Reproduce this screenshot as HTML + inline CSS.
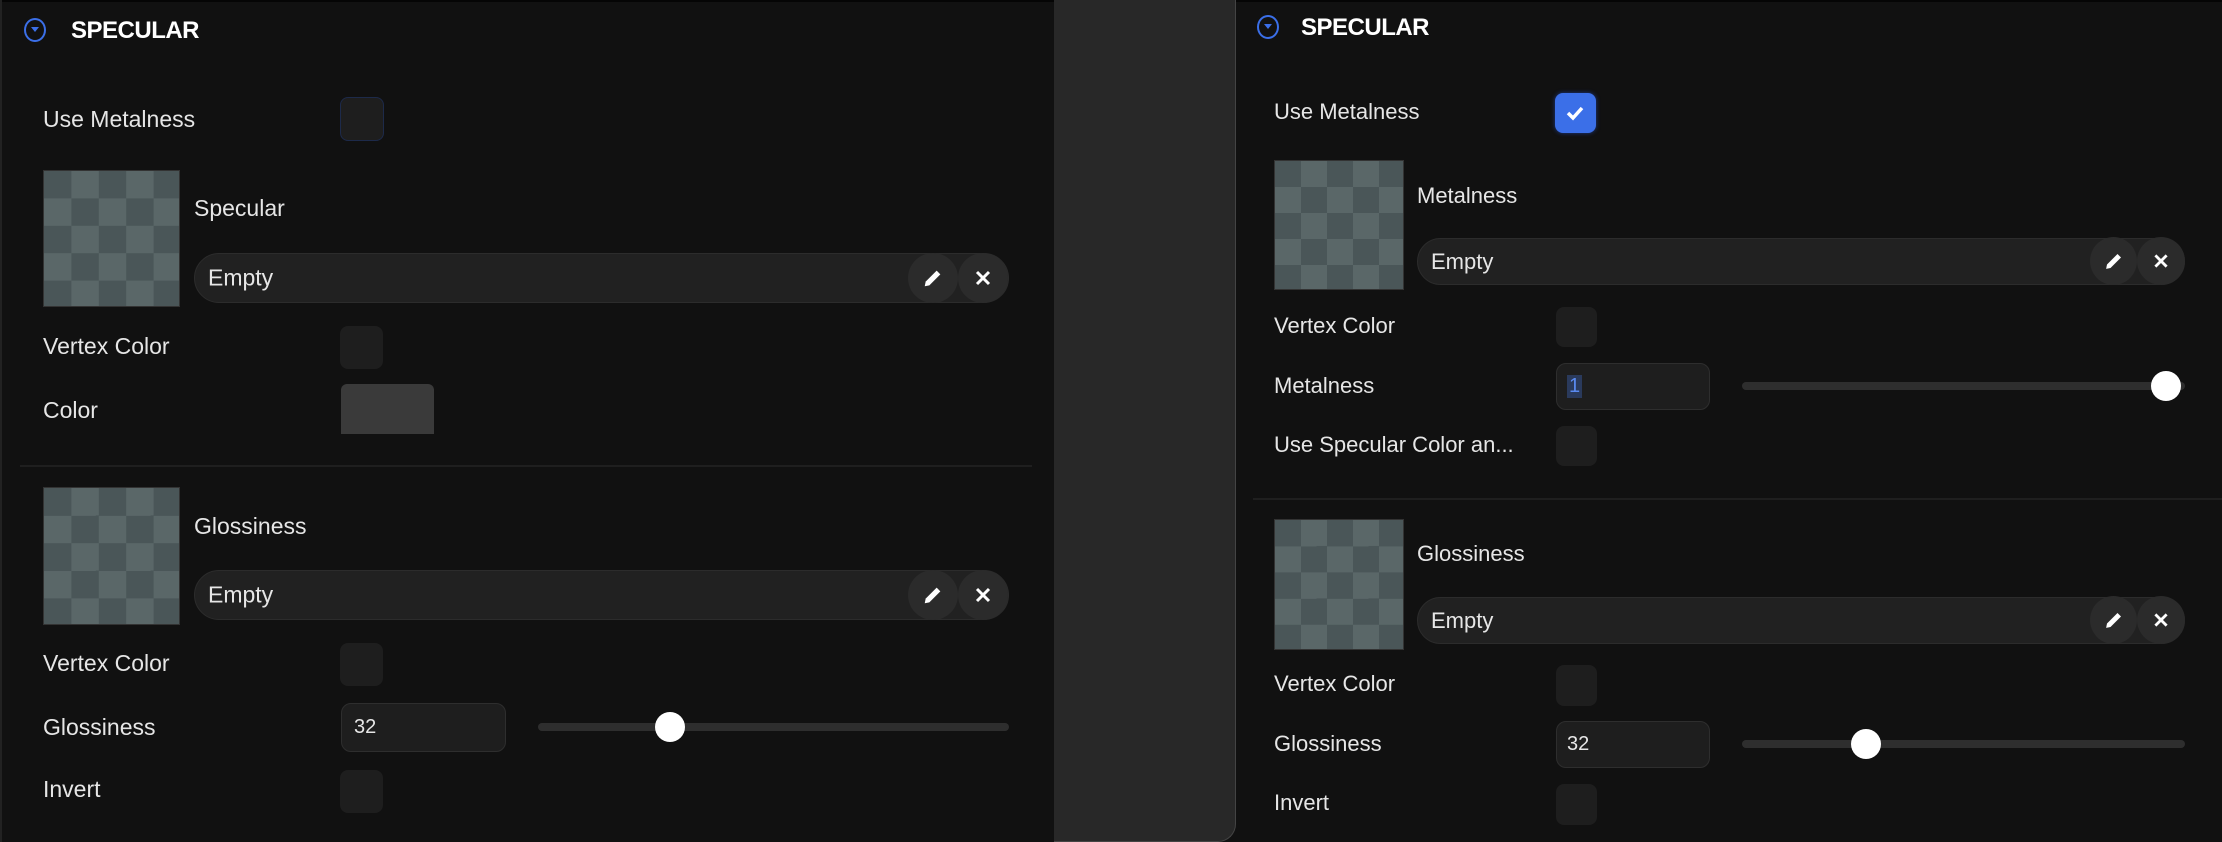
<!DOCTYPE html>
<html><head><meta charset="utf-8"><style>
*{margin:0;padding:0;box-sizing:border-box}
body{width:2222px;height:842px;background:#111;position:relative;overflow:hidden;font-family:"Liberation Sans",sans-serif;color:#e6e6e6}
.a{position:absolute}
.lbl{position:absolute;font-size:23px;line-height:30px;transform:translateY(-50%);white-space:nowrap}
.r .lbl{font-size:22px}
.hdr{position:absolute;font-size:24px;font-weight:bold;color:#fff;transform:translateY(-50%);line-height:30px;letter-spacing:-0.5px}
.ic{position:absolute;border:2.5px solid #3b6fe8;border-radius:50%;width:22px;height:24px}
.ic:after{content:"";position:absolute;left:5px;top:7px;border-left:4px solid transparent;border-right:4px solid transparent;border-top:5px solid #3b6fe8}
.cb{position:absolute;background:#1e1e1e;border-radius:8px}
.thumb{position:absolute;background-color:#5a6768;background-image:conic-gradient(transparent 25%,#4a5658 0 50%,transparent 0 75%,#4a5658 0);border:1px solid #333}
.fld{position:absolute;background:#212121;border:1px solid #2c2c2c;border-radius:30px}
.fld span{position:absolute;left:13px;top:50%;transform:translateY(-50%);font-size:23px}
.btn{position:absolute;background:#2b2b2b;border-radius:50%}
.btn svg{position:absolute;left:50%;top:50%;transform:translate(-50%,-50%)}
.inp{position:absolute;background:#1e1e1e;border:1px solid #2e2e2e;border-radius:10px;font-size:20px}
.trk{position:absolute;height:8px;background:#2e2e2e;border-radius:4px}
.knob{position:absolute;width:30px;height:30px;border-radius:50%;background:#fff}
.div{position:absolute;height:2px;background:#1f1f1f}
</style></head><body>
<div class="a" style="left:0;top:0;width:2222px;height:2px;background:#050505"></div>
<div class="a" style="left:1054px;top:0;width:182px;height:842px;background:#282828;border-right:1px solid #444;border-bottom:1px solid #444;border-bottom-right-radius:18px"></div>
<div class="a" style="left:0;top:0;width:2px;height:842px;background:#222"></div>

<!-- LEFT -->
<div class="ic" style="left:24px;top:18px"></div>
<div class="hdr" style="left:71px;top:31px">SPECULAR</div>
<div class="lbl" style="left:43px;top:119px">Use Metalness</div>
<div class="cb" style="left:340px;top:97px;width:44px;height:44px;border:1.5px solid #1d2a4a"></div>
<div class="thumb" style="left:43px;top:170px;width:137px;height:137px;background-size:54.8px 54.8px"></div>
<div class="lbl" style="left:194px;top:208px">Specular</div>
<div class="fld" style="left:194px;top:253px;width:815px;height:50px"><span>Empty</span></div>
<div class="btn" style="left:908px;top:253px;width:50px;height:50px"><svg width="22" height="22" viewBox="0 0 24 24"><path d="M3 21l1-5L16 4l4 4L8 20z" fill="#fff"/></svg></div>
<div class="btn" style="left:958px;top:253px;width:50px;height:50px"><svg width="16" height="16" viewBox="0 0 16 16"><path d="M2 2L14 14M14 2L2 14" stroke="#fff" stroke-width="3"/></svg></div>
<div class="lbl" style="left:43px;top:346px">Vertex Color</div>
<div class="cb" style="left:340px;top:326px;width:43px;height:43px"></div>
<div class="lbl" style="left:43px;top:410px">Color</div>
<div class="a" style="left:341px;top:384px;width:93px;height:50px;background:#3a3a3a;border-radius:6px 6px 0 0"></div>
<div class="div" style="left:20px;top:465px;width:1012px"></div>
<div class="thumb" style="left:43px;top:487px;width:137px;height:138px;background-size:54.8px 55.2px"></div>
<div class="lbl" style="left:194px;top:526px">Glossiness</div>
<div class="fld" style="left:194px;top:570px;width:815px;height:50px"><span>Empty</span></div>
<div class="btn" style="left:908px;top:570px;width:50px;height:50px"><svg width="22" height="22" viewBox="0 0 24 24"><path d="M3 21l1-5L16 4l4 4L8 20z" fill="#fff"/></svg></div>
<div class="btn" style="left:958px;top:570px;width:50px;height:50px"><svg width="16" height="16" viewBox="0 0 16 16"><path d="M2 2L14 14M14 2L2 14" stroke="#fff" stroke-width="3"/></svg></div>
<div class="lbl" style="left:43px;top:663px">Vertex Color</div>
<div class="cb" style="left:340px;top:643px;width:43px;height:43px"></div>
<div class="lbl" style="left:43px;top:727px">Glossiness</div>
<div class="inp" style="left:341px;top:703px;width:165px;height:49px"><span class="a" style="left:12px;top:12px">32</span></div>
<div class="trk" style="left:538px;top:723px;width:471px"></div>
<div class="knob" style="left:655px;top:712px"></div>
<div class="lbl" style="left:43px;top:789px">Invert</div>
<div class="cb" style="left:340px;top:770px;width:43px;height:43px"></div>

<!-- RIGHT -->
<div class="r">
<div class="ic" style="left:1257px;top:15px"></div>
<div class="hdr" style="left:1301px;top:28px">SPECULAR</div>
<div class="lbl" style="left:1274px;top:112px">Use Metalness</div>
<div class="cb" style="left:1555px;top:93px;width:41px;height:40px;background:#3b6fe8;box-shadow:0 0 4px #1e3a8a"><svg class="a" style="left:10px;top:11px" width="20" height="18" viewBox="0 0 20 18"><path d="M3 9l5 5 9-10" stroke="#fff" stroke-width="3.5" fill="none"/></svg></div>
<div class="thumb" style="left:1274px;top:160px;width:130px;height:130px;background-size:52px 52px"></div>
<div class="lbl" style="left:1417px;top:196px">Metalness</div>
<div class="fld" style="left:1417px;top:238px;width:768px;height:47px"><span style="font-size:22px">Empty</span></div>
<div class="btn" style="left:2090px;top:237px;width:47px;height:48px"><svg width="21" height="21" viewBox="0 0 24 24"><path d="M3 21l1-5L16 4l4 4L8 20z" fill="#fff"/></svg></div>
<div class="btn" style="left:2137px;top:237px;width:48px;height:48px"><svg width="15" height="15" viewBox="0 0 16 16"><path d="M2 2L14 14M14 2L2 14" stroke="#fff" stroke-width="3"/></svg></div>
<div class="lbl" style="left:1274px;top:326px">Vertex Color</div>
<div class="cb" style="left:1556px;top:307px;width:41px;height:40px"></div>
<div class="lbl" style="left:1274px;top:386px">Metalness</div>
<div class="inp" style="left:1556px;top:363px;width:154px;height:47px"><span class="a" style="left:10px;top:11px;background:#2a3a5c;color:#5a8af0;padding:0 2px">1</span></div>
<div class="trk" style="left:1742px;top:382px;width:443px"></div>
<div class="knob" style="left:2151px;top:371px"></div>
<div class="lbl" style="left:1274px;top:445px">Use Specular Color an...</div>
<div class="cb" style="left:1556px;top:426px;width:41px;height:40px"></div>
<div class="div" style="left:1253px;top:498px;width:969px"></div>
<div class="thumb" style="left:1274px;top:519px;width:130px;height:131px;background-size:52px 52.4px"></div>
<div class="lbl" style="left:1417px;top:554px">Glossiness</div>
<div class="fld" style="left:1417px;top:597px;width:768px;height:47px"><span style="font-size:22px">Empty</span></div>
<div class="btn" style="left:2090px;top:596px;width:47px;height:48px"><svg width="21" height="21" viewBox="0 0 24 24"><path d="M3 21l1-5L16 4l4 4L8 20z" fill="#fff"/></svg></div>
<div class="btn" style="left:2137px;top:596px;width:48px;height:48px"><svg width="15" height="15" viewBox="0 0 16 16"><path d="M2 2L14 14M14 2L2 14" stroke="#fff" stroke-width="3"/></svg></div>
<div class="lbl" style="left:1274px;top:684px">Vertex Color</div>
<div class="cb" style="left:1556px;top:665px;width:41px;height:41px"></div>
<div class="lbl" style="left:1274px;top:744px">Glossiness</div>
<div class="inp" style="left:1556px;top:721px;width:154px;height:47px"><span class="a" style="left:10px;top:11px">32</span></div>
<div class="trk" style="left:1742px;top:740px;width:443px"></div>
<div class="knob" style="left:1851px;top:729px"></div>
<div class="lbl" style="left:1274px;top:803px">Invert</div>
<div class="cb" style="left:1556px;top:784px;width:41px;height:41px"></div>
</div>
</body></html>
